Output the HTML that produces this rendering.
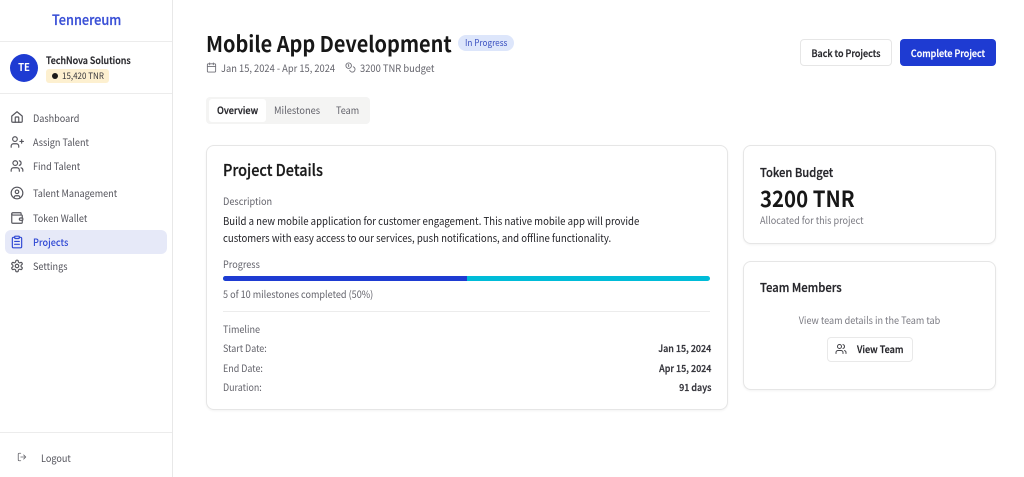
<!DOCTYPE html>
<html><head><meta charset="utf-8">
<style>
html,body{margin:0;padding:0;background:#fff}
body{width:1024px;height:477px;overflow:hidden;position:relative;font-family:"Noto Sans CJK SC","Liberation Sans",sans-serif;color:#1a1a1a}
.t{position:absolute;white-space:nowrap;line-height:14px;transform:scaleX(.91);transform-origin:0 50%}
.c{transform-origin:50% 50%}
.r{transform-origin:100% 50%}
.b{position:absolute;box-sizing:border-box}
.card{background:#fff;border:1px solid #e6e6e6;border-radius:8px;box-shadow:0 1px 2px rgba(0,0,0,.05)}
svg{position:absolute;fill:none;stroke-width:2;stroke-linecap:round;stroke-linejoin:round}
.nav{font-size:10px;color:#52525a;left:33px}
.ic{stroke:#55555c;width:14px;height:14px;left:10px}
.g{color:#63636b;font-size:10px}
.m{font-weight:500}
.h{-webkit-text-stroke:.25px currentColor}
</style></head><body>
<div class="b" style="left:172px;top:0;width:1px;height:477px;background:#e8e8e8"></div>
<div class="b" style="left:0;top:41px;width:172px;height:1px;background:#ececec"></div>
<div class="b" style="left:0;top:93px;width:172px;height:1px;background:#ececec"></div>
<div class="b" style="left:0;top:432px;width:172px;height:1px;background:#ececec"></div>
<div class="t m h" style="left:52px;top:13px;font-size:14px;color:#3a50d6">Tennereum</div>

<div class="b" style="left:10px;top:54px;width:28px;height:28px;border-radius:50%;background:#1e3bd2"></div>
<div class="t c" style="left:10px;width:28px;text-align:center;top:61px;font-size:10.5px;font-weight:700;color:#fff">TE</div>
<div class="t m h" style="left:46px;top:53px;font-size:9.85px;color:#26262b">TechNova Solutions</div>
<div class="b" style="left:46px;top:69px;width:63px;height:14px;background:#fdf0d0;border-radius:3px"></div>
<div class="b" style="left:52px;top:73px;width:6px;height:6px;border-radius:50%;background:#1a1a1a"></div>
<div class="t" style="left:62px;top:69px;font-size:8.8px;color:#33333a">15,420 TNR</div>

<div class="b" style="left:5px;top:230px;width:162px;height:24px;background:#e6e9f8;border-radius:6px"></div>

<svg class="ic" style="top:110px" viewBox="0 0 24 24"><path d="M3 10.5 12 3l9 7.5V19a2 2 0 0 1-2 2H5a2 2 0 0 1-2-2z"/><path d="M9 21v-8a1 1 0 0 1 1-1h4a1 1 0 0 1 1 1v8"/></svg>
<div class="t nav" style="top:110.5px">Dashboard</div>
<svg class="ic" style="top:135px" viewBox="0 0 24 24"><path d="M15 21v-2a4 4 0 0 0-4-4H6a4 4 0 0 0-4 4v2"/><circle cx="8.5" cy="7" r="4"/><path d="M20 8v6M23 11h-6"/></svg>
<div class="t nav" style="top:135px">Assign Talent</div>
<svg class="ic" style="top:159px" viewBox="0 0 24 24"><path d="M16 21v-2a4 4 0 0 0-4-4H6a4 4 0 0 0-4 4v2"/><circle cx="9" cy="7" r="4"/><path d="M22 21v-2a4 4 0 0 0-3-3.87M16 3.13a4 4 0 0 1 0 7.75"/></svg>
<div class="t nav" style="top:159px">Find Talent</div>
<svg class="ic" style="top:186px" viewBox="0 0 24 24"><circle cx="12" cy="12" r="10"/><circle cx="12" cy="10" r="3"/><path d="M7 20.7v-1a3 3 0 0 1 3-3h4a3 3 0 0 1 3 3v1"/></svg>
<div class="t nav" style="top:186px">Talent Management</div>
<svg class="ic" style="top:211px" viewBox="0 0 24 24"><path d="M19 7V4a1 1 0 0 0-1-1H5a2 2 0 0 0 0 4h15a1 1 0 0 1 1 1v4h-3a2 2 0 0 0 0 4h3a1 1 0 0 0 1-1v-2a1 1 0 0 0-1-1"/><path d="M3 5v14a2 2 0 0 0 2 2h15a1 1 0 0 0 1-1v-4"/></svg>
<div class="t nav" style="top:211px">Token Wallet</div>
<svg class="ic" style="top:235px;stroke:#2f48d4" viewBox="0 0 24 24"><rect x="8" y="2" width="8" height="4" rx="1"/><path d="M16 4h2a2 2 0 0 1 2 2v14a2 2 0 0 1-2 2H6a2 2 0 0 1-2-2V6a2 2 0 0 1 2-2h2"/><path d="M8 11h8M8 16h8"/></svg>
<div class="t nav m" style="top:235px;color:#2f48d4">Projects</div>
<svg class="ic" style="top:259px" viewBox="0 0 24 24"><path d="M12.2 2h-.4a2 2 0 0 0-2 2v.2a2 2 0 0 1-1 1.7l-.4.3a2 2 0 0 1-2 0l-.2-.1a2 2 0 0 0-2.7.7l-.2.4a2 2 0 0 0 .7 2.7l.2.1a2 2 0 0 1 1 1.7v.5a2 2 0 0 1-1 1.7l-.2.1a2 2 0 0 0-.7 2.7l.2.4a2 2 0 0 0 2.7.7l.2-.1a2 2 0 0 1 2 0l.4.3a2 2 0 0 1 1 1.7v.2a2 2 0 0 0 2 2h.4a2 2 0 0 0 2-2v-.2a2 2 0 0 1 1-1.7l.4-.3a2 2 0 0 1 2 0l.2.1a2 2 0 0 0 2.7-.7l.2-.4a2 2 0 0 0-.7-2.7l-.2-.1a2 2 0 0 1-1-1.7v-.5a2 2 0 0 1 1-1.7l.2-.1a2 2 0 0 0 .7-2.7l-.2-.4a2 2 0 0 0-2.7-.7l-.2.1a2 2 0 0 1-2 0l-.4-.3a2 2 0 0 1-1-1.7V4a2 2 0 0 0-2-2z"/><circle cx="12" cy="12" r="3"/></svg>
<div class="t nav" style="top:259px">Settings</div>
<svg style="left:17px;top:452px;width:10px;height:10px;stroke:#66666c" viewBox="0 0 24 24"><path d="M9 21H5a2 2 0 0 1-2-2V5a2 2 0 0 1 2-2h4M16 17l5-5-5-5M21 12H9"/></svg>
<div class="t nav" style="left:41px;top:450.5px">Logout</div>

<div class="t" style="left:206px;top:37px;font-size:21.9px;font-weight:700;color:#171717">Mobile App Development</div>
<div class="b" style="left:458px;top:35px;width:56px;height:16px;border-radius:8px;background:#dde6fb"></div>
<div class="t" style="left:465px;top:36px;font-size:9px;color:#3a50c0">In Progress</div>
<svg style="left:206px;top:62px;width:11px;height:11px;stroke:#707078" viewBox="0 0 24 24"><rect x="3" y="4" width="18" height="18" rx="2"/><path d="M16 2v4M8 2v4M3 10h18"/></svg>
<div class="t g" style="left:221px;top:61px;font-size:10.25px">Jan 15, 2024 - Apr 15, 2024</div>
<svg style="left:345px;top:62px;width:11px;height:11px;stroke:#707078" viewBox="0 0 24 24"><circle cx="8" cy="8" r="6"/><path d="M18.1 10.4A6 6 0 1 1 10.3 18"/><path d="M7 6h1v4"/></svg>
<div class="t g" style="left:360px;top:61px;font-size:10.3px">3200 TNR budget</div>

<div class="b" style="left:800px;top:39px;width:92px;height:27px;background:#fff;border:1px solid #e6e6e6;border-radius:4px"></div>
<div class="t m h c" style="left:800px;width:92px;text-align:center;top:46px;font-size:9.9px;color:#26262b">Back to Projects</div>
<div class="b" style="left:900px;top:39px;width:96px;height:27px;background:#1e3bd2;border-radius:4px"></div>
<div class="t m h c" style="left:900px;width:96px;text-align:center;top:46px;font-size:9.85px;color:#fff">Complete Project</div>

<div class="b" style="left:206px;top:97px;width:164px;height:27px;background:#f4f4f3;border-radius:4px"></div>
<div class="b" style="left:209px;top:99px;width:57px;height:23px;background:#fff;border-radius:3px"></div>
<div class="t m h" style="left:217px;top:103px;font-size:10px;color:#26262b">Overview</div>
<div class="t" style="left:274px;top:103px;font-size:10.2px;color:#63636b">Milestones</div>
<div class="t" style="left:336px;top:103px;font-size:10px;color:#63636b">Team</div>

<div class="b card" style="left:206px;top:145px;width:522px;height:265px"></div>
<div class="t m h" style="left:223px;top:163px;font-size:15.9px;color:#1a1a1a">Project Details</div>
<div class="t g" style="left:223px;top:194px;font-size:10.1px">Description</div>
<div class="t" style="left:223px;top:214.5px;font-size:10.55px;color:#222227">Build a new mobile application for customer engagement. This native mobile app will provide</div>
<div class="t" style="left:223px;top:231.5px;font-size:10.55px;color:#222227">customers with easy access to our services, push notifications, and offline functionality.</div>
<div class="t g" style="left:223px;top:257px">Progress</div>
<div class="b" style="left:223px;top:276px;width:487px;height:5px;background:#00bcd8;border-radius:3px;overflow:hidden"><div style="width:243.5px;height:5px;background:#1e3bd2"></div></div>
<div class="t g" style="left:223px;top:287px">5 of 10 milestones completed (50%)</div>
<div class="b" style="left:223px;top:311px;width:487px;height:1px;background:#ececec"></div>
<div class="t g" style="left:223px;top:322px">Timeline</div>
<div class="t g" style="left:223px;top:341px;font-size:9.8px">Start Date:</div>
<div class="t g" style="left:223px;top:361px;font-size:9.8px">End Date:</div>
<div class="t g" style="left:223px;top:379.5px;font-size:9.8px">Duration:</div>
<div class="t m h r" style="right:313px;top:341px;font-size:9.85px;color:#33333a">Jan 15, 2024</div>
<div class="t m h r" style="right:313px;top:361px;font-size:9.85px;color:#33333a">Apr 15, 2024</div>
<div class="t m h r" style="right:313px;top:379.5px;font-size:9.85px;color:#33333a">91 days</div>

<div class="b card" style="left:743px;top:145px;width:253px;height:99px"></div>
<div class="t m h" style="left:760px;top:165px;font-size:12.3px;color:#26262b">Token Budget</div>
<div class="t" style="left:760px;top:191px;font-size:22.4px;font-weight:700;color:#171717">3200 TNR</div>
<div class="t g" style="left:760px;top:213px;color:#7a7a82">Allocated for this project</div>

<div class="b card" style="left:743px;top:261px;width:253px;height:129px"></div>
<div class="t m h" style="left:760px;top:280px;font-size:12.4px;color:#26262b">Team Members</div>
<div class="t c" style="left:743px;width:253px;text-align:center;top:313px;font-size:10px;color:#7a7a82">View team details in the Team tab</div>
<div class="b" style="left:827px;top:337px;width:86px;height:25px;background:#fff;border:1px solid #e9e9e9;border-radius:4px"></div>
<svg style="left:835px;top:343px;width:12px;height:12px;stroke:#44444a" viewBox="0 0 24 24"><path d="M16 21v-2a4 4 0 0 0-4-4H6a4 4 0 0 0-4 4v2"/><circle cx="9" cy="7" r="4"/><path d="M22 21v-2a4 4 0 0 0-3-3.87M16 3.13a4 4 0 0 1 0 7.75"/></svg>
<div class="t m h" style="left:857px;top:342px;font-size:10px;color:#26262b">View Team</div>
</body></html>
